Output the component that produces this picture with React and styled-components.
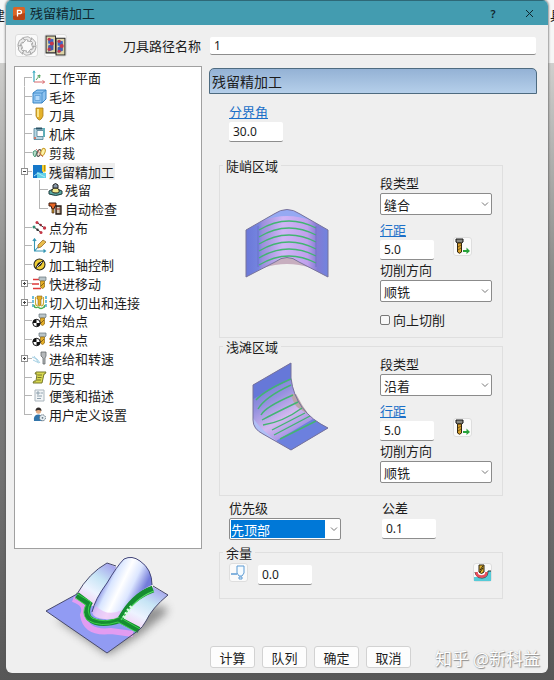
import React from "react";
import styled, { createGlobalStyle } from "styled-components";

const GlobalStyle = createGlobalStyle`
  *, *::before, *::after { box-sizing: border-box; }
  body {
    margin: 0;
    font: 13px/17px "Noto Sans CJK SC", sans-serif;
    color: #1c1c1c;
  }
  button, input, select { font: inherit; color: inherit; margin: 0; }
`;

const Desktop = styled.div`
  position: relative;
  display: flex;
  min-height: 100vh;
  padding: 0 6px 7px;
  overflow: hidden;
  background: linear-gradient(#f6f6f6 0 63px, #cfcfcd 63px, #8c8c8a 40%, #717171 70%, #575757);
`;

const Behind = styled.span`
  position: absolute;
  top: 6px;
  ${(p) => (p.$side === "left" ? "left: -8px;" : "left: calc(100% - 4px);")}
`;

const Dialog = styled.main`
  position: relative;
  flex: 1;
  display: flex;
  flex-direction: column;
  background: #efefef;
  border-radius: 6px;
  overflow: hidden;
  box-shadow: 0 0 2px 1px #55555599;
`;

const TitleBar = styled.header`
  display: flex;
  align-items: center;
  height: 25px;
  padding: 0 10px 0 7px;
  gap: 5px;
  background: #439cb0;
  border-top: 1px solid #2e6877;
`;

const Title = styled.h1`
  flex: 1;
  margin: 0;
  padding-bottom: 2px;
  font-size: 13px;
  font-weight: 400;
  color: #10272e;
`;

const WindowButton = styled.button`
  display: grid;
  place-items: center;
  width: 18px;
  height: 20px;
  margin-left: 13px;
  padding: 0;
  border: 0;
  background: none;
  font: 600 11px "Noto Sans", sans-serif;
  color: #10272e;
`;

const NameBar = styled.div`
  display: flex;
  align-items: center;
  gap: 6px;
  padding: 9px 12px 0 9px;
`;

const ToolButton = styled.button`
  display: grid;
  place-items: center;
  flex: none;
  width: ${(p) => p.$size || 19}px;
  height: ${(p) => p.$size || 19}px;
  padding: 0;
  border: 1px solid #dedede;
  border-radius: 3px;
  background: #fafafa;
`;

const NameLabel = styled.label`
  width: 131px;
  padding: 0 3px 1px 0;
  text-align: right;
  white-space: nowrap;
`;

const TextInput = styled.input`
  width: ${(p) => (p.$wide ? "100%" : "54px")};
  min-width: 0;
  flex: ${(p) => (p.$wide ? "1" : "none")};
  height: ${(p) => (p.$wide ? 18 : 20)}px;
  padding: 0 4px;
  border: 0;
  border-bottom: 1px solid #8d8d8d;
  border-radius: 2px;
  background: #fff;
  font-family: "Noto Sans", sans-serif;
  font-size: 12px;
`;

const Body = styled.div`
  flex: 1;
  display: grid;
  grid-template-columns: 188px 1fr;
  gap: 7px;
  padding: 9px 11px 5px 8px;
`;

const Sidebar = styled.aside`
  display: flex;
  flex-direction: column;
`;

const Tree = styled.ul`
  flex: 1;
  margin: 0;
  padding: 1px 0 0 6px;
  list-style: none;
  background: #fff;
  border: 1px solid #a0a0a0;
  display: grid;
  grid-template-rows: repeat(19, minmax(0, 1fr)) 124px;
`;

const line = "#b5b5b5";

const TreeItem = styled.li`
  display: flex;
  align-items: center;
  min-height: 0;
`;

const Branch = styled.span`
  align-self: stretch;
  display: flex;
  align-items: center;
  flex: none;
  width: ${(p) => p.$width}px;
  background-image:
    linear-gradient(${line}, ${line}),
    linear-gradient(${line}, ${line});
  background-repeat: no-repeat;
  background-size:
    1px ${(p) => (p.$first || p.$last ? "50%" : "100%")},
    ${(p) => (p.$through ? "0" : "9px")} 1px;
  background-position: 3px ${(p) => (p.$first ? "100%" : "0")}, 3px 50%;
`;

const ChildBranch = styled(Branch)`
  width: 12px;
  margin-left: -6px;
`;

const Expander = styled.button`
  width: 7px;
  height: 7px;
  padding: 0;
  border: 1px solid #8f8f8f;
  background:
    linear-gradient(#444, #444) center / 3px 1px no-repeat,
    linear-gradient(#444, #444) center / ${(p) => (p.$open ? "0 0" : "1px 3px")} no-repeat,
    #fff;
`;

const NodeLabel = styled.span`
  margin-left: 2px;
  padding-right: 1px;
  white-space: nowrap;
  background: ${(p) => (p.$current ? "#eeeeee" : "none")};
`;

const Preview = styled.div`
  display: grid;
  padding: 7px 0 6px 30px;
`;

const Panel = styled.section`
  display: flex;
  flex-direction: column;
  min-width: 0;
  padding-top: 2px;
`;

const PanelTitle = styled.h2`
  margin: 0;
  height: 26px;
  padding: 0 2px;
  font-size: 14px;
  font-weight: 400;
  line-height: 24px;
  border: 1px solid #4e6b80;
  border-radius: 5px 5px 0 0;
  background: linear-gradient(#94b2d5, #b5cfea);
`;

const Form = styled.form`
  flex: 1;
  display: flex;
  flex-direction: column;
`;

const Settings = styled.div`
  flex: 1;
  padding: 9px 34px 0 10px;
`;

const Field = styled.div`
  display: grid;
  justify-items: start;
  gap: 2px;
  margin-bottom: ${(p) => p.$space || 0}px;
`;

const AngleField = styled(Field)`
  padding-left: 10px;
`;

const FieldLink = styled.a`
  color: #1b6fc8;
  text-decoration: underline;
  text-underline-offset: 1px;
`;

const StepField = styled.div`
  display: grid;
  grid-template-columns: 54px 19px;
  gap: 2px 19px;
  margin-bottom: 1px;

  > button {
    grid-area: 1 / 2 / 3 / 3;
    align-self: end;
    margin-bottom: 4px;
  }
`;

const Group = styled.fieldset`
  min-width: 0;
  margin: 0;
  padding: 0 10px ${(p) => p.$bottom}px 0;
  border: 1px solid #dfdfdf;
`;

const Legend = styled.legend`
  margin-left: 3px;
  padding: 0 3px;
`;

const Region = styled.div`
  display: grid;
  grid-template-columns: 1fr 112px;
  padding-left: 25px;
`;

const Figure = styled.div`
  padding-top: ${(p) => p.$top}px;
`;

const SelectBox = styled.span`
  display: grid;
  align-items: center;
  width: 112px;
  height: 22px;
  border: 1px solid #8b8b8b;
  border-radius: 2px;
  background: #fff;

  > * { grid-area: 1 / 1; }
  > svg { justify-self: end; margin-right: 2px; pointer-events: none; }
`;

const NativeSelect = styled.select`
  appearance: none;
  width: 100%;
  height: 20px;
  padding: 1px 15px 1px 1px;
  border: 0;
  border-radius: 0;
  text-indent: ${(p) => (p.$active ? 0 : 2)}px;
  line-height: 17px;
  background: ${(p) => (p.$active ? "#0078d7" : "transparent")} content-box;
  color: ${(p) => (p.$active ? "#fff" : "inherit")};
`;

const CheckRow = styled.div`
  padding-top: 9px;
`;

const CheckLabel = styled.label`
  display: flex;
  align-items: center;
  gap: 3px;
`;

const CheckBox = styled.input`
  appearance: none;
  width: 10px;
  height: 10px;
  border: 1px solid #777;
  border-radius: 2px;
  background: #f8f8f8;
  &:checked { background: #0078d7; }
`;

const PairRow = styled.div`
  display: grid;
  grid-template-columns: 153px 1fr;
  padding: 3px 0 4px 10px;
`;

const AllowanceRow = styled.div`
  display: flex;
  align-items: flex-start;
  gap: 10px;
  padding-left: 9px;
  margin-top: 2px;

  > input { margin-top: 2px; }
`;

const Grow = styled.span`
  flex: 1;
`;

const Actions = styled.footer`
  display: flex;
  gap: 7px;
  padding-left: 1px;
`;

const ActionButton = styled.button`
  width: 45px;
  height: 22px;
  padding: 0;
  line-height: 19px;
  border: 1px solid #d2d2d2;
  border-radius: 3px;
  background: #fdfdfd;
`;

const Watermark = styled.span`
  position: absolute;
  right: 8px;
  bottom: 3px;
  font-size: 17px;
  line-height: 25px;
  color: #fff;
  text-shadow: 1px 1px 1px #8a8a8a, 0 0 1px #aaa;
`;

const Svg = ({ w = 15, h = 15, box = "0 0 15 15", children }) => (
  <svg width={w} height={h} viewBox={box} fill="none" aria-hidden="true">
    {children}
  </svg>
);

const Mill = ({ x = 0 }) => (
  <g transform={`translate(${x} 0)`}>
    <path d="M6 1h7v3l-1 1H7L6 4z" fill="#b9c4c8" stroke="#66747a" strokeWidth=".7" />
    <path d="M7.500 5h4v6q-2 3-4 0z" fill="#e4ad24" stroke="#8c671b" strokeWidth=".7" />
    <path d="M8 10l3-3" stroke="#896315" />
  </g>
);

const Target = () => (
  <g>
    <circle cx="4.500" cy="10" r="3.700" fill="#fff" stroke="#111" />
    <path d="M4.500 10V6.300A3.700 3.700 0 0 0 .8 10zM4.500 10v3.700A3.700 3.700 0 0 0 8.200 10z" fill="#111" />
  </g>
);

const icons = {
  plane: (
    <>
      <path d="M2 1v11" stroke="#36a9bd" strokeWidth="1.200" />
      <path d="M.8 3L2 .8 3.200 3" stroke="#36a9bd" strokeWidth=".8" />
      <path d="M4 10l4-5M5.300 6L8 5 7.500 8" stroke="#55a562" />
      <path d="M2 12h10M10.500 10.500L12.800 12l-2.300 1.500" stroke="#d8686c" />
    </>
  ),
  block: (
    <>
      <path d="M1 4l4-3h9v9l-4 4H1z" fill="#8dc3f0" stroke="#3b85c5" />
      <path d="M1 4h9v10M10 4l4-3" stroke="#3b85c5" strokeWidth=".8" />
      <path d="M3 6.500h5v5H3z" fill="#b4dafa" stroke="#5b9dd8" strokeWidth=".8" />
    </>
  ),
  tool: (
    <>
      <path d="M4 1h7v8q-3.500 8-7 0z" fill="#e5b22b" stroke="#a87b1d" strokeWidth=".8" />
      <path d="M6 2v8" stroke="#fff0a0" strokeWidth="1.600" />
    </>
  ),
  machine: (
    <>
      <path d="M2 2.500h9v2H5v6h6v3H2z" fill="#b7d7e4" stroke="#4c7d92" strokeWidth=".8" />
      <path d="M11 2h2v9h-2z" fill="#5eaeb9" />
      <path d="M4 1.500h6v2H4z" fill="#2b5365" />
      <path d="M2 11h2v2H2z" fill="#cf7769" />
    </>
  ),
  trim: (
    <>
      <path d="M1 7q2-3 4 0l-2 5Q1 11 1 7z" fill="#b9ddc9" stroke="#4c997b" />
      <ellipse cx="7" cy="8" rx="1.800" ry="3.500" transform="rotate(20 7 8)" fill="#f3e3d2" stroke="#444" />
      <ellipse cx="11" cy="7" rx="2" ry="3.800" transform="rotate(20 11 7)" fill="#fff3a8" stroke="#c79a25" />
      <path d="M4 4l7 8" stroke="#c05347" strokeWidth=".8" />
    </>
  ),
  rest: (
    <>
      <path d="M1 1h10v8l-4 5H1z" fill="#1678c9" />
      <path d="M5 8l5 1h4v5H5z" fill="#62d0e7" />
      <path d="M10 1h4v6q-2 3-4 0z" fill="#f1cf34" />
      <path d="M12.500 1v6" stroke="#b68a18" />
      <path d="M2 12l4-3 3 2 4 2" stroke="#a8e9f7" />
    </>
  ),
  residue: (
    <>
      <path d="M1 9q6-4 13 0v3q-6 3-13 0z" fill="#59a8a1" stroke="#203d3f" />
      <path d="M4 8q-1 3 4 3 4 0 3-3L9.500 6h-4z" fill="#f1e98d" stroke="#26251c" />
      <path d="M5 3q2.500-3 5 0v3H5z" fill="#8898a7" stroke="#222" />
    </>
  ),
  check: (
    <>
      <path d="M1 2h7v3H7l-1 3H4L3 5H1z" fill="#e66525" stroke="#3c1a0f" />
      <path d="M4 8h2v4H4z" fill="#c49530" stroke="#4a2911" strokeWidth=".7" />
      <path d="M8 5h5v8H8z" fill="#b29b7f" stroke="#251913" strokeWidth="1.300" />
      <path d="M10 6v6" stroke="#fff" />
      <path d="M8 8h4" stroke="#b12e22" />
    </>
  ),
  points: (
    <>
      <path d="M5 2.500l7.500 5.500M2 7l7 5.500" stroke="#333" />
      <g fill="#c43746">
        <circle cx="5" cy="2.500" r="1.500" /><circle cx="12.500" cy="8" r="1.700" />
        <circle cx="9" cy="12.500" r="1.500" />
      </g>
      <circle cx="2" cy="7" r="1.500" fill="#2f8b72" />
      <circle cx="8.700" cy="5" r="1.200" fill="#8e2734" />
      <circle cx="5.500" cy="9.700" r="1.200" fill="#333" />
    </>
  ),
  axis: (
    <>
      <path d="M2.500 1v12H13M.8 3L2.500.8 4.200 3M11.500 11.500l2 1.500-2 1.500M2.500 13L8 7" stroke="#3596b3" strokeWidth="1.100" />
      <path d="M6 7l5-5 3 2-5 5-3 1z" fill="#e9bd4c" stroke="#986c2b" strokeWidth=".8" />
    </>
  ),
  control: (
    <>
      <circle cx="7.500" cy="7.500" r="5.500" fill="#f2cf35" stroke="#292820" strokeWidth="1.100" />
      <path d="M3 11.500L6 6l6-3-3 5.500z" fill="#222" />
      <path d="M5 10l5-5" stroke="#fff" strokeWidth=".8" />
    </>
  ),
  rapid: (
    <>
      <path d="M1 3.500h6M0 8h7M1 12.500h8" stroke="#dd3a3a" strokeWidth="1.500" />
      <Mill x={1} />
    </>
  ),
  leads: (
    <>
      <path d="M1 1v11h2M14 1v11h-2" stroke="#35a4cf" strokeWidth="1.400" strokeDasharray="3 1" />
      <path d="M2 10q1 4 4 2 3 3 6 0l1-2" stroke="#4bae4e" strokeWidth="1.300" />
      <path d="M3.500 2v6q0 3 2.500 3M11.500 2v6q0 3-2.500 3" stroke="#caab35" strokeWidth="1.100" />
      <path d="M5 1h5v3H9v6q-1.500 2-3 0V4H5z" fill="#e4ad24" stroke="#8c671b" strokeWidth=".6" />
    </>
  ),
  start: (<><Mill x={1} /><Target /></>),
  feeds: (
    <>
      <path d="M0 6l5 2 3 4M1 9l6 3M2 5l4 6" stroke="#9ccbe0" strokeWidth=".9" />
      <path d="M9 1h5v4l-1 2v6h-2V7L9 5z" fill="#b5b8ba" stroke="#656a6d" strokeWidth=".8" />
    </>
  ),
  history: (
    <>
      <path d="M4 2h10l-1 2h-1l-2 9H1l1-2h2L5 4H3z" fill="#d8d84f" stroke="#77782d" />
      <path d="M6 5h4M5.500 7.500h4M5 10h4" stroke="#77782d" />
    </>
  ),
  notes: (
    <>
      <path d="M3 2h9v11H3z" fill="#f2f5f7" stroke="#aab5bd" />
      <path d="M5 4h2v2H5zM8.500 5H11M5 8h5M5 10.500h4" stroke="#8598a5" strokeWidth=".9" />
    </>
  ),
  user: (
    <>
      <circle cx="6.500" cy="4" r="2.700" fill="#e6ae85" />
      <path d="M3.500 4q0-3.500 3-3.500T9.500 4q-3-2-6 0z" fill="#332d2b" />
      <path d="M2 14q-1-6 4-6.500 4 0 5 4v2.500z" fill="#3375aa" />
      <circle cx="10.500" cy="10.800" r="3" fill="#e7eef3" stroke="#60717d" strokeDasharray="1.500 .8" />
      <circle cx="10.500" cy="10.800" r=".9" fill="#60717d" />
    </>
  ),
};

const nodes = [
  { icon: "plane", text: "工作平面" },
  { icon: "block", text: "毛坯" },
  { icon: "tool", text: "刀具" },
  { icon: "machine", text: "机床" },
  { icon: "trim", text: "剪裁" },
  { icon: "rest", text: "残留精加工", open: true, current: true },
  { icon: "residue", text: "残留", child: true },
  { icon: "check", text: "自动检查", child: true, lastChild: true },
  { icon: "points", text: "点分布" },
  { icon: "axis", text: "刀轴" },
  { icon: "control", text: "加工轴控制" },
  { icon: "rapid", text: "快进移动", open: false },
  { icon: "leads", text: "切入切出和连接", open: false },
  { icon: "start", text: "开始点" },
  { icon: "start", text: "结束点" },
  { icon: "feeds", text: "进给和转速", open: false },
  { icon: "history", text: "历史" },
  { icon: "notes", text: "便笺和描述" },
  { icon: "user", text: "用户定义设置" },
];

const AppIcon = () => (
  <Svg w={12} h={13} box="0 0 12 13">
    <rect width="12" height="13" rx="1.500" fill="#db6425" />
    <path d="M0 9l12-3v5q0 2-2 2H2q-2 0-2-2z" fill="#b84415" />
    <path d="M4.500 9.500V3.300h2.200q1.800 0 1.800 1.700T6.700 6.700H4.500" stroke="#fff" strokeWidth="1.300" />
  </Svg>
);

const RecycleIcon = () => (
  <Svg w={20} h={20} box="0 0 20 20">
    <g stroke="#a0a0a0" fill="#ececec" strokeWidth=".8" strokeLinejoin="round">
      {[0, 60, 120, 180, 240, 300].map((a) => (
        <path key={a} d="M6.500 1.500l4.500-.8 2.500 1.600 1.200-.5-.7 4-3.800-.8 1-.7-1.700-.8-3 .8z" transform={`rotate(${a} 10 10)`} />
      ))}
    </g>
  </Svg>
);

const CompareIcon = () => (
  <Svg w={21} h={21} box="0 0 20 20">
    <path d="M1 1h9v16H1zM10.500 3h8.500v16h-8.500z" fill="#ddd3a6" stroke="#292929" />
    <path d="M3 3l5 1v5L3 8zM12 5l5 1v5l-5-1z" fill="#3c65c7" />
    <path d="M3 10l5-2v6l-5 2zM12 12l5-3v6l-5 2z" fill="#465bab" />
    <g fill="#c5354b">
      <circle cx="4" cy="4" r="1.500" /><circle cx="6.500" cy="8" r="1.900" />
      <circle cx="13.500" cy="6" r="1.500" /><circle cx="16" cy="10.500" r="1.900" />
      <circle cx="4" cy="13.500" r="1.500" /><circle cx="13.500" cy="15.500" r="1.500" />
    </g>
  </Svg>
);

const ToolArrowIcon = () => (
  <Svg w={17} h={17} box="0 0 17 17">
    <path d="M2 1h7v3L7.500 5h-4L2 4z" fill="#8b8b84" stroke="#171717" />
    <path d="M3.500 5h4v9q-2 2.500-4 0z" fill="#d9a12d" stroke="#35270e" />
    <path d="M4 9l3-2M4 12l3-2" stroke="#79591a" />
    <path d="M9 12h3.500V9.500L16 13l-3.500 3v-2H9z" fill="#28a33b" />
  </Svg>
);

const HolderIcon = () => (
  <Svg w={17} h={17} box="0 0 17 17">
    <path d="M7 2h7v7l-2 3H9L7 9zM9 13h3v2H9z" fill="#f5fbff" stroke="#5c9bd4" />
    <path d="M1 10h6" stroke="#5c9bd4" strokeWidth="1.300" />
  </Svg>
);

const AllowanceIcon = () => (
  <Svg w={17} h={17} box="0 0 17 17">
    <path d="M0 13h5q4 2 7-1l2-5h3v10H0z" fill="#55cbd8" />
    <path d="M1 8q1 6 7 6t6-7h3" stroke="#333" />
    <path d="M2.500 8q0 4.500 5 4.500T12.500 8" stroke="#e94e5c" strokeWidth="2.500" />
    <path d="M5 1h5v7q-2.500 3-5 0z" fill="#e2b22e" stroke="#2a2412" />
    <path d="M6 6l3-4M6 8l3-4" stroke="#2a2412" />
  </Svg>
);

const SteepFigure = () => (
  <Svg w={84} h={71} box="0 0 84 71">
    <defs>
      <linearGradient id="steepFill">
        <stop stopColor="#6b78d8" /><stop offset=".15" stopColor="#7484df" />
        <stop offset=".2" stopColor="#9b8fdc" /><stop offset=".45" stopColor="#d0b5f6" />
        <stop offset=".75" stopColor="#c0a0ed" /><stop offset=".87" stopColor="#827bd4" />
        <stop offset="1" stopColor="#7084df" />
      </linearGradient>
    </defs>
    <path d="M1 22L29 6Q42-3 55 6L83 22V69L54 54Q42 45 30 54L1 69z" fill="url(#steepFill)" />
    <path d="M17 13L31 5Q42-2 53 5L67 13Q42 3 17 13z" fill="#95a9f3" />
    <path d="M18 60L30 54Q42 45 54 54L66 60Q42 52 18 60z" fill="#c7aebf" />
    {[0, 7, 14, 21, 28, 35].map((d) => (
      <path key={d} d={`M14 ${22 + d}Q42 ${5 + d} 71 ${20 + d}`} stroke="#42b572" strokeWidth="1.400" />
    ))}
    <path d="M13 18v41M71 18v41" stroke="#696bc2" strokeWidth=".7" />
    <path d="M1 22L29 6Q42-3 55 6L83 22V69L54 54Q42 45 30 54L1 69z" stroke="#77739b" />
  </Svg>
);

const ShallowFigure = () => (
  <Svg w={84} h={90} box="0 0 84 90">
    <defs>
      <linearGradient id="shallowFill" x1=".2" y1=".1" x2=".7" y2="1">
        <stop stopColor="#6675d5" /><stop offset=".3" stopColor="#9691df" />
        <stop offset=".55" stopColor="#d3b9ef" /><stop offset=".75" stopColor="#a794e4" />
        <stop offset="1" stopColor="#6c80de" />
      </linearGradient>
    </defs>
    <path d="M8 23L46 1V16Q50 50 83 66L46 88 18 72Q8 67 8 58z" fill="url(#shallowFill)" />
    <path d="M8 23L46 1v16L8 37z" fill="#6678d8" />
    <path d="M68 57l15 9-37 22-15-9z" fill="#6c80de" />
    <path d="M46 32h5q6 12 13 21L52 45q-4-4-6-13z" fill="#b9a5aa" />
    <path d="M8 56q8 12 25 24l-15-8Q8 67 8 58z" fill="#b0bff5" />
    <path d="M11 38Q20 28 46 17M13 47Q20 35 46 23M16 53Q20 45 48 33M17 58Q30 51 53 40M18 63Q38 60 57 46M27 68L60 51M29 73L65 54M35 77L71 59" stroke="#42b572" strokeWidth="1.400" />
    <path d="M8 23L46 1V16Q50 50 83 66L46 88 18 72Q8 67 8 58z" stroke="#77739b" />
  </Svg>
);

const StrategyPicture = () => (
  <Svg w={136} h={106} box="0 0 136 106">
    <defs>
      <linearGradient id="tubeFill" x1=".2" y1=".35" x2=".8" y2=".65">
        <stop stopColor="#7c83df" /><stop offset=".2" stopColor="#d8e5ff" />
        <stop offset=".45" stopColor="#ffffff" /><stop offset=".7" stopColor="#dce6ff" />
        <stop offset="1" stopColor="#737cdb" />
      </linearGradient>
      <linearGradient id="wingFill" x1=".2" y1="1" x2=".8" y2="0">
        <stop stopColor="#f4c5f0" /><stop offset=".35" stopColor="#edf3ff" />
        <stop offset=".65" stopColor="#c7e5f5" /><stop offset="1" stopColor="#a5a4ed" />
      </linearGradient>
      <filter id="soft" x="-30%" y="-30%" width="160%" height="160%"><feGaussianBlur stdDeviation="4" /></filter>
    </defs>
    <path d="M12 63l52 36 32-20 22-18q12-10-3-11z" fill="#727272" opacity=".75" filter="url(#soft)" />
    <path d="M33 38L62 60 95 74 63 97 2 55z" fill="#919bf3" />
    <path d="M33 38Q45 17 63 7l9 4-12 35-15 5z" fill="url(#wingFill)" />
    <path d="M109 31l15 8q-16 13-22 26-4 7-7 9L73 62z" fill="url(#wingFill)" />
    <path d="M29 43Q44 48 39 59 42 78 67 75l22 3" stroke="#e29cf1" strokeWidth="6" />
    <path d="M33 39l12 9q-4 8 0 14 10 9 31 2l19 10" stroke="#158d31" strokeWidth="6" />
    <path d="M32 37l15 9q-6 10 1 16 14 6 27-1l21 12M31 42l11 7q-5 8 1 15 14 8 31 2l18 10" stroke="#49e052" strokeWidth=".8" />
    <path d="M76 62q9-20 33-29" stroke="#158d31" strokeWidth="7" />
    <path d="M77 64q14-22 33-29" stroke="#56db66" strokeWidth="1.200" />
    <path d="M80 62l4-7 5-6" stroke="#d8ffe0" strokeWidth="4" strokeDasharray="2 2" />
    <path d="M48 56Q51 43 63 27 73 10 80 3q8-4 16 2 12 8 12 24Q87 38 74 61q-6 3-13 2-12-1-13-7z" fill="url(#tubeFill)" />
    <path d="M48 56q1 7 13 7 9 1 13-2l5-8q-15 9-27-3z" fill="#e8b2f3" opacity=".6" />
    <path d="M48 56Q51 43 63 27 73 10 80 3q8-4 16 2 12 8 12 24" stroke="#44467a" />
    <path d="M2 55l31-17Q45 17 63 7l9 3M109 30l15 9q-16 13-22 26-4 7-7 9L63 97 2 55" stroke="#484a6c" />
  </Svg>
);

function Select({ id, options, active }) {
  return (
    <SelectBox>
      <NativeSelect id={id} $active={active}>
        {options.map((o) => <option key={o}>{o}</option>)}
      </NativeSelect>
      <Svg w={8} h={8} box="0 0 8 8"><path d="M1 2.500l3 3 3-3" stroke="#777" /></Svg>
    </SelectBox>
  );
}

function RegionFields({ id, type, children }) {
  return (
    <div>
      <Field $space={6}>
        <label htmlFor={`${id}-type`}>段类型</label>
        <Select id={`${id}-type`} options={[type]} />
      </Field>
      <StepField>
        <FieldLink href="#stepover" id={`${id}-step`}>行距</FieldLink>
        <TextInput defaultValue="5.0" aria-labelledby={`${id}-step`} />
        <ToolButton type="button" aria-label="从刀具获取行距"><ToolArrowIcon /></ToolButton>
      </StepField>
      <Field>
        <label htmlFor={`${id}-direction`}>切削方向</label>
        <Select id={`${id}-direction`} options={["顺铣"]} />
      </Field>
      {children}
    </div>
  );
}

function TreeNode({ node, first, last }) {
  const expandable = node.open !== undefined;
  return (
    <TreeItem>
      <Branch $width={node.child ? 21 : 11} $first={first} $last={last} $through={node.child}>
        {expandable && <Expander type="button" $open={node.open} aria-label={node.text} aria-expanded={node.open} />}
      </Branch>
      {node.child && <ChildBranch $last={node.lastChild} />}
      <Svg>{icons[node.icon]}</Svg>
      <NodeLabel $current={node.current}>{node.text}</NodeLabel>
    </TreeItem>
  );
}

export default function App() {
  return (
    <Desktop>
      <GlobalStyle />
      <Behind $side="left" aria-hidden="true">建</Behind>
      <Behind $side="right" aria-hidden="true">具</Behind>
      <Dialog>
        <TitleBar>
          <AppIcon />
          <Title>残留精加工</Title>
          <WindowButton aria-label="帮助">?</WindowButton>
          <WindowButton aria-label="关闭">
            <Svg w={9} h={9} box="0 0 9 9"><path d="M1 1l7 7M8 1L1 8" stroke="#10272e" /></Svg>
          </WindowButton>
        </TitleBar>
        <NameBar>
          <ToolButton $size={23} aria-label="重新计算"><RecycleIcon /></ToolButton>
          <ToolButton $size={23} aria-label="比较"><CompareIcon /></ToolButton>
          <NameLabel htmlFor="toolpath-name">刀具路径名称</NameLabel>
          <TextInput id="toolpath-name" $wide defaultValue="1" />
        </NameBar>
        <Body>
          <Sidebar>
            <Tree>
              {nodes.map((n, i) => (
                <TreeNode key={n.text} node={n} first={i === 0} last={i === nodes.length - 1} />
              ))}
            </Tree>
            <Preview><StrategyPicture /></Preview>
          </Sidebar>
          <Panel>
            <PanelTitle>残留精加工</PanelTitle>
            <Form onSubmit={(e) => e.preventDefault()}>
              <Settings>
                <AngleField $space={15}>
                  <FieldLink href="#angle" id="angle">分界角</FieldLink>
                  <TextInput defaultValue="30.0" aria-labelledby="angle" />
                </AngleField>
                <Group $bottom={9}>
                  <Legend>陡峭区域</Legend>
                  <Region>
                    <Figure $top={34}><SteepFigure /></Figure>
                    <RegionFields id="steep" type="缝合">
                      <CheckRow>
                        <CheckLabel><CheckBox type="checkbox" />向上切削</CheckLabel>
                      </CheckRow>
                    </RegionFields>
                  </Region>
                </Group>
                <Group $bottom={12}>
                  <Legend>浅滩区域</Legend>
                  <Region>
                    <Figure $top={7}><ShallowFigure /></Figure>
                    <RegionFields id="shallow" type="沿着" />
                  </Region>
                </Group>
                <PairRow>
                  <Field>
                    <label htmlFor="priority">优先级</label>
                    <Select id="priority" options={["先顶部"]} active />
                  </Field>
                  <Field>
                    <label htmlFor="tolerance">公差</label>
                    <TextInput id="tolerance" defaultValue="0.1" />
                  </Field>
                </PairRow>
                <Group $bottom={13}>
                  <Legend>余量</Legend>
                  <AllowanceRow>
                    <ToolButton type="button" aria-label="余量类型"><HolderIcon /></ToolButton>
                    <TextInput defaultValue="0.0" aria-label="余量" />
                    <Grow />
                    <ToolButton type="button" aria-label="部件余量"><AllowanceIcon /></ToolButton>
                  </AllowanceRow>
                </Group>
              </Settings>
              <Actions>
                {["计算", "队列", "确定", "取消"].map((t) => <ActionButton key={t} type="button">{t}</ActionButton>)}
              </Actions>
            </Form>
          </Panel>
        </Body>
        <Watermark>知乎 @新科益</Watermark>
      </Dialog>
    </Desktop>
  );
}
